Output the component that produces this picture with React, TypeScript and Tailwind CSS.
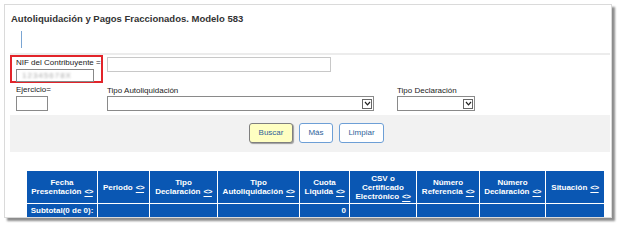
import React from "react";

const font = { fontFamily: '"Liberation Sans", Arial, sans-serif' };

function Chevron() {
  return (
    <div className="w-[10px] h-[10px] border border-[#666] bg-white flex items-center justify-center">
      <svg width="7" height="5" viewBox="0 0 7 5">
        <path d="M1 1 L3.5 3.8 L6 1" fill="none" stroke="#222" strokeWidth="1.2" />
      </svg>
    </div>
  );
}

function Select({ w }: { w: string }) {
  return (
    <div className={`${w} h-[15px] border border-[#8a8a8a] bg-white flex items-center justify-end pr-[1px]`}>
      <Chevron />
    </div>
  );
}

function Sort() {
  return <span className="underline decoration-1 underline-offset-[2px] ml-[3px] tracking-[-0.5px]">&lt;&gt;</span>;
}

const cols: { w: string; lines: string[] }[] = [
  { w: "w-[70px]", lines: ["Fecha", "Presentación"] },
  { w: "w-[51px]", lines: ["Periodo"] },
  { w: "w-[67px]", lines: ["Tipo", "Declaración"] },
  { w: "w-[81px]", lines: ["Tipo", "Autoliquidación"] },
  { w: "w-[49px]", lines: ["Cuota", "Liquida"] },
  { w: "w-[66px]", lines: ["CSV o", "Certificado", "Electrónico"] },
  { w: "w-[62px]", lines: ["Número", "Referencia"] },
  { w: "w-[65px]", lines: ["Número", "Declaración"] },
  { w: "w-[58px]", lines: ["Situación"] },
];

export default function App() {
  return (
    <div className="w-[618px] h-[226px] bg-white pt-[4px] pl-[4px] overflow-hidden" style={font}>
      <div className="w-[608px] h-[214px] border border-[#dadada] bg-white shadow-[3px_3px_2px_rgba(0,0,0,0.45)] overflow-hidden pl-[5px] pr-[1px]">
        {/* title */}
        <div className="h-[26px] pt-[8px] pl-[1px] text-[9.5px] leading-[12px] font-bold text-[#333]">
          Autoliquidación y Pagos Fraccionados. Modelo 583
        </div>
        {/* blue cursor line */}
        <div className="h-[22px] pl-[11px]">
          <div className="w-[1px] h-[17px] bg-[#7aa5d3]" />
        </div>
        {/* separator */}
        <div className="h-[2px] bg-[#ececec]" />
        {/* row 1 */}
        <div className="flex h-[28px]">
          <div className="w-[93px] h-[28px] border-2 border-[#e2242a] pl-[4px] pt-[1px]">
            <div className="text-[8px] leading-[10px] text-[#222]">NIF del Contribuyente =</div>
            <div className="w-[78px] h-[13px] border border-[#888] bg-white mt-[1px] pl-[5px] flex items-center">
              <span className="text-[8px] text-[#aaa] blur-[1.2px] tracking-[1px]">12345678X</span>
            </div>
          </div>
          <div className="ml-[4px] mt-[2px] w-[224px] h-[15px] border border-[#c8c8c8] bg-white" />
        </div>
        {/* row 2 */}
        <div className="flex h-[32px] pt-[2px]">
          <div className="ml-[6px] w-[91px]">
            <div className="text-[8px] leading-[10px] text-[#222]">Ejercicio=</div>
            <div className="w-[32px] h-[15px] border border-[#8a8a8a] bg-white mt-[1px]" />
          </div>
          <div className="w-[290px] pt-[1px]">
            <div className="text-[8px] leading-[10px] text-[#222]">Tipo Autoliquidación</div>
            <Select w="w-[267px]" />
          </div>
          <div className="pt-[1px]">
            <div className="text-[8px] leading-[10px] text-[#222]">Tipo Declaración</div>
            <Select w="w-[78px]" />
          </div>
        </div>
        {/* gray button bar */}
        <div className="h-[37px] bg-[#f2f2f2] flex items-center gap-[6px] pl-[239px] pb-[1px]">
          <div className="w-[44px] h-[20px] rounded-[3px] border border-[#7f7f7f] bg-[#ffffc2] shadow-[1px_1px_1px_rgba(0,0,0,0.35)] flex items-center justify-center text-[8px] text-[#2f5f9a]">
            Buscar
          </div>
          <div className="w-[34px] h-[20px] rounded-[3px] border border-[#6d9fd6] bg-white flex items-center justify-center text-[8px] text-[#2f5f9a]">
            Más
          </div>
          <div className="w-[45px] h-[20px] rounded-[3px] border border-[#6d9fd6] bg-white flex items-center justify-center text-[8px] text-[#2f5f9a]">
            Limpiar
          </div>
        </div>
        {/* table */}
        <div className="mt-[19px] ml-[17px] w-[579px] bg-white flex flex-col gap-px">
          <div className="flex gap-px h-[32px]">
            {cols.map((c, i) => (
              <div
                key={i}
                className={`${c.w} bg-[#0a57b3] text-white font-bold text-[8px] leading-[9px] flex flex-col items-center justify-center text-center`}
              >
                {c.lines.map((l, j) => (
                  <div key={j} className="whitespace-nowrap">
                    {l}
                    {j === c.lines.length - 1 && <Sort />}
                  </div>
                ))}
              </div>
            ))}
          </div>
          <div className="flex gap-px h-[13px]">
            {cols.map((c, i) => (
              <div
                key={i}
                className={`${c.w} bg-[#0a57b3] text-white font-bold text-[8px] leading-[13px] ${i === 0 ? "text-center" : "text-right pr-[3px]"}`}
              >
                {i === 0 ? "Subtotal(0 de 0):" : i === 4 ? "0" : ""}
              </div>
            ))}
          </div>
        </div>
      </div>
    </div>
  );
}
